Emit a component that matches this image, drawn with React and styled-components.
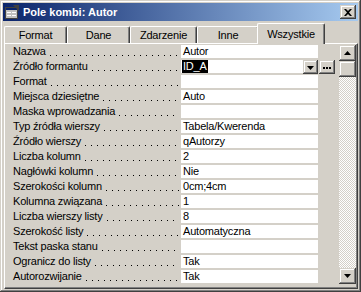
import React from 'react';
import styled, { createGlobalStyle } from 'styled-components';

const GlobalStyle = createGlobalStyle`
    html, body {
        margin: 0;
        padding: 0;
        background: #d4d0c8;
    }
    * {
        box-sizing: border-box;
    }
`;

const raised = `
    background: #d4d0c8;
    box-shadow: inset -1px -1px #404040, inset 1px 1px #d4d0c8,
        inset -2px -2px #808080, inset 2px 2px #ffffff;
`;

const properties = [
    { label: 'Nazwa', value: 'Autor' },
    { label: 'Źródło formantu', value: 'ID_A', combo: true },
    { label: 'Format', value: '' },
    { label: 'Miejsca dziesiętne', value: 'Auto' },
    { label: 'Maska wprowadzania', value: '' },
    { label: 'Typ źródła wierszy', value: 'Tabela/Kwerenda' },
    { label: 'Źródło wierszy', value: 'qAutorzy' },
    { label: 'Liczba kolumn', value: '2' },
    { label: 'Nagłówki kolumn', value: 'Nie' },
    { label: 'Szerokości kolumn', value: '0cm;4cm' },
    { label: 'Kolumna związana', value: '1' },
    { label: 'Liczba wierszy listy', value: '8' },
    { label: 'Szerokość listy', value: 'Automatyczna' },
    { label: 'Tekst paska stanu', value: '' },
    { label: 'Ogranicz do listy', value: 'Tak' },
    { label: 'Autorozwijanie', value: 'Tak' },
];

const tabs = [
    { name: 'Format', width: 63 },
    { name: 'Dane', width: 63 },
    { name: 'Zdarzenie', width: 67 },
    { name: 'Inne', width: 62 },
    { name: 'Wszystkie', width: 68, active: true },
];

const App = () => {
    return (
        <>
            <GlobalStyle />
            <Window>
                <TitleBar>
                    <svg width="16" height="16" viewBox="0 0 16 16">
                        <rect x="1.5" y="3.5" width="12" height="11" fill="#c0c0c0" stroke="#404040" />
                        <rect x="2" y="4" width="11" height="2" fill="#0a246a" />
                        <rect x="3" y="8" width="4" height="1" fill="#fff" />
                        <rect x="8" y="8" width="4" height="1" fill="#fff" />
                        <rect x="3" y="11" width="4" height="1" fill="#fff" />
                        <rect x="8" y="11" width="4" height="1" fill="#fff" />
                        <path d="M9 1 L15 1 L15 7 Z" fill="#404040" />
                    </svg>
                    <TitleText>Pole kombi: Autor</TitleText>
                    <CloseButton>
                        <svg width="8" height="7" viewBox="0 0 8 7">
                            <path d="M0 0h2l2 2 2-2h2L5 3.5 8 7H6L4 5 2 7H0l3-3.5z" fill="#000" />
                        </svg>
                    </CloseButton>
                </TitleBar>

                <TabStrip>
                    {tabs.map((t) => (
                        <Tab key={t.name} $width={t.width} $active={t.active}>
                            {t.name}
                        </Tab>
                    ))}
                </TabStrip>

                <Panel>
                    <Rows>
                        {properties.map((p) => (
                            <Row key={p.label}>
                                <Label>
                                    <span>{p.label}</span>
                                    <Leader />
                                </Label>
                                {p.combo ? (
                                    <>
                                        <Value $width={122}>
                                            <Selected>{p.value}</Selected>
                                        </Value>
                                        <SmallButton $width={15}>
                                            <svg width="7" height="4" viewBox="0 0 7 4">
                                                <path d="M0 0h7L3.5 4z" fill="#000" />
                                            </svg>
                                        </SmallButton>
                                        <SmallButton $width={16} $gap={1}>
                                            <svg width="8" height="2" viewBox="0 0 8 2">
                                                <rect x="0" y="0" width="2" height="2" fill="#000" />
                                                <rect x="3" y="0" width="2" height="2" fill="#000" />
                                                <rect x="6" y="0" width="2" height="2" fill="#000" />
                                            </svg>
                                        </SmallButton>
                                    </>
                                ) : (
                                    <Value $width={137}>{p.value}</Value>
                                )}
                            </Row>
                        ))}
                    </Rows>

                    <ScrollBar>
                        <ScrollButton>
                            <svg width="7" height="4" viewBox="0 0 7 4">
                                <path d="M3.5 0L7 4H0z" fill="#000" />
                            </svg>
                        </ScrollButton>
                        <Thumb />
                        <Track />
                        <ScrollButton>
                            <svg width="7" height="4" viewBox="0 0 7 4">
                                <path d="M0 0h7L3.5 4z" fill="#000" />
                            </svg>
                        </ScrollButton>
                    </ScrollBar>
                </Panel>
            </Window>
        </>
    );
};

const Window = styled.div`
    width: 361px;
    height: 292px;
    display: flex;
    flex-direction: column;
    padding: 3px;
    font-family: "Liberation Sans", Arial, sans-serif;
    font-size: 11px;
    letter-spacing: -0.2px;
    color: #000;
    ${raised}
`;

const TitleBar = styled.div`
    height: 18px;
    display: flex;
    align-items: center;
    padding: 0 2px 0 1px;
    gap: 3px;
    background: linear-gradient(to right, #0a246a, #a6caf0);
    flex-shrink: 0;
`;

const TitleText = styled.span`
    flex: 1;
    color: #ffffff;
    font-weight: bold;
    letter-spacing: 0;
    white-space: nowrap;
`;

const CloseButton = styled.div`
    width: 16px;
    height: 14px;
    display: flex;
    align-items: center;
    justify-content: center;
    padding-top: 1px;
    ${raised}
`;

const TabStrip = styled.div`
    height: 20px;
    margin-top: 2px;
    padding-left: 1px;
    display: flex;
    align-items: flex-end;
    flex-shrink: 0;
    position: relative;
    z-index: 1;
`;

const Tab = styled.div`
    width: ${(p) => p.$width}px;
    height: ${(p) => (p.$active ? 21 : 17)}px;
    margin: 0 0 ${(p) => (p.$active ? '-1px -2px' : '0 0')};
    padding-top: ${(p) => (p.$active ? 2 : 0)}px;
    padding-bottom: ${(p) => (p.$active ? 3 : 0)}px;
    display: flex;
    align-items: center;
    justify-content: center;
    background: #d4d0c8;
    border-top: 1px solid #ffffff;
    border-left: 1px solid #ffffff;
    border-right: 1px solid #404040;
    border-radius: 2px 2px 0 0;
    box-shadow: inset -1px 0 #808080;
    position: relative;
    z-index: ${(p) => (p.$active ? 2 : 1)};
`;

const Panel = styled.div`
    flex: 1;
    margin: 0 0 0 1px;
    display: flex;
    padding: 1px 0 0 1px;
    border-top: 1px solid #ffffff;
    border-left: 1px solid #ffffff;
    border-right: 1px solid #404040;
    border-bottom: 1px solid #404040;
    box-shadow: inset -1px -1px #808080;
`;

const Rows = styled.div`
    flex: 1;
    display: flex;
    flex-direction: column;
    align-self: flex-start;
`;

const Row = styled.div`
    height: 13px;
    margin-bottom: 2px;
    display: flex;
`;

const Label = styled.div`
    width: 175px;
    display: flex;
    padding: 0 2px 0 7px;
    line-height: 13px;
    white-space: nowrap;
    overflow: hidden;
`;

/* dotted leader after each label, drawn as 1px dots every 6px on the baseline */
const Leader = styled.span`
    flex: 1;
    margin-left: 4px;
    background: linear-gradient(to right, #000 0 1px, transparent 1px 6px) 0 10px / 6px 1px repeat-x;
`;

const Value = styled.div`
    width: ${(p) => p.$width}px;
    background: #ffffff;
    padding-left: 2px;
    line-height: 13px;
    white-space: nowrap;
`;

const Selected = styled.span`
    display: inline-block;
    height: 13px;
    background: #000000;
    color: #ffffff;
    margin-left: -1px;
    padding: 0 1px;
`;

const SmallButton = styled.div`
    width: ${(p) => p.$width}px;
    height: 14px;
    margin-left: ${(p) => p.$gap || 0}px;
    display: flex;
    align-items: center;
    justify-content: center;
    padding-top: 1px;
    ${raised}
`;

const ScrollBar = styled.div`
    width: 17px;
    height: 239px;
    margin-right: 1px;
    display: flex;
    flex-direction: column;
`;

const ScrollButton = styled.div`
    height: 16px;
    display: flex;
    align-items: center;
    justify-content: center;
    flex-shrink: 0;
    ${raised}
`;

const Thumb = styled.div`
    height: 16px;
    flex-shrink: 0;
    ${raised}
`;

const Track = styled.div`
    flex: 1;
    background: repeating-conic-gradient(#ffffff 0 25%, #d4d0c8 0 50%) 0 0 / 2px 2px;
`;

export default App;
